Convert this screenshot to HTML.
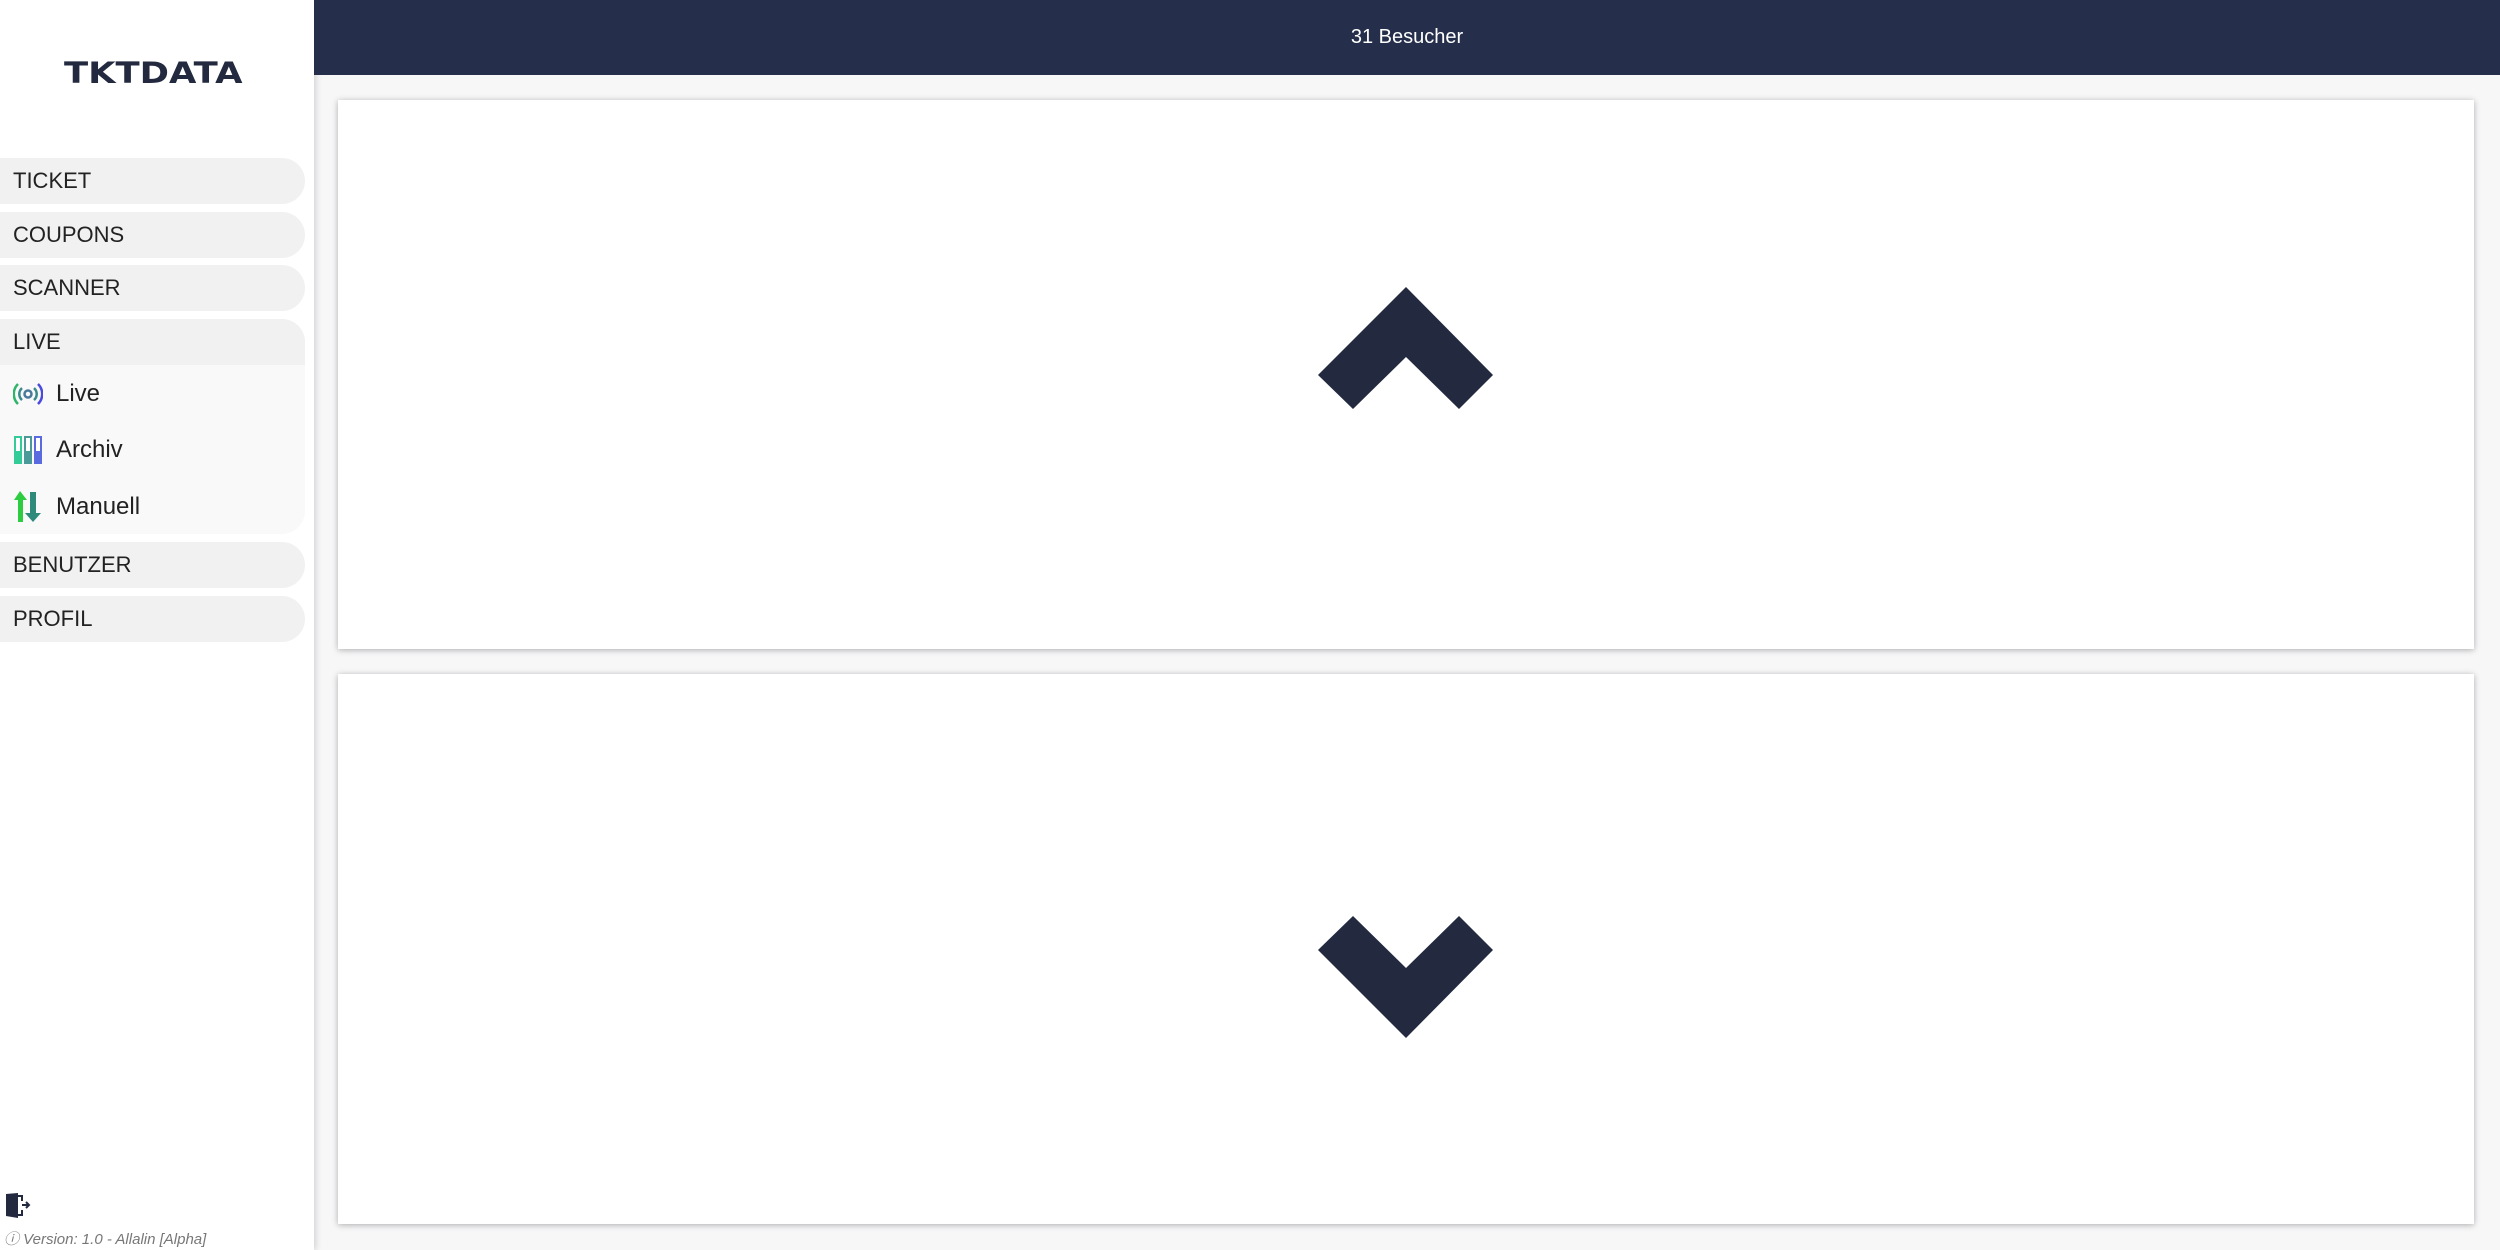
<!DOCTYPE html>
<html><head><meta charset="utf-8"><style>
*{margin:0;padding:0;box-sizing:border-box}
body{width:2500px;height:1250px;background:#f7f7f8;font-family:"Liberation Sans","DejaVu Sans",sans-serif;position:relative;overflow:hidden}
#side{position:absolute;left:0;top:0;width:314px;height:1250px;background:#fff;box-shadow:2px 0 6px rgba(0,0,0,.15)}
.logo{position:absolute;left:64px;top:56px;font-weight:900;font-size:29px;letter-spacing:0px;color:#232a40;font-family:"DejaVu Sans",sans-serif;transform:scaleX(1.22);transform-origin:left}
.nav{position:absolute;left:0;width:305px;height:46px;background:#f1f1f1;border-radius:0 23px 23px 0;font-size:22px;color:#222;padding-left:13px;line-height:46px}
.sub{position:absolute;left:0;top:319px;width:305px;height:215px;background:#f9f9f9;border-radius:0 23px 23px 0}
.sub .hd{height:46px;background:#f1f1f1;border-radius:0 23px 0 0;font-size:22px;color:#222;padding-left:13px;line-height:46px}
.it{position:absolute;left:13px;font-size:24px;color:#222;display:flex;align-items:center;height:40px}
.it svg{margin-right:13px}
#hdr{position:absolute;left:314px;top:0;right:0;height:75px;background:#252f4c;color:#fff;font-size:20px;text-align:center;line-height:75px}
.card{position:absolute;left:338px;width:2136px;background:#fff;box-shadow:0 1px 6px rgba(0,0,0,.3)}
</style></head><body>
<div id="side">
<div class="logo">TKTDATA</div>
<div class="nav" style="top:158px">TICKET</div>
<div class="nav" style="top:212px">COUPONS</div>
<div class="nav" style="top:265px">SCANNER</div>
<div class="sub"><div class="hd">LIVE</div></div>
<div class="it" style="top:374px"><svg width="30" height="22" viewBox="0 0 30 22"><circle cx="15" cy="11" r="3.5" fill="none" stroke="#4a7a9a" stroke-width="2.5"/><path d="M9 5a8 8 0 0 0 0 12M21 5a8 8 0 0 1 0 12" fill="none" stroke="#3a8a8a" stroke-width="2.5"/><path d="M5 1a14 14 0 0 0 0 20" fill="none" stroke="#2fb56a" stroke-width="2.5"/><path d="M25 1a14 14 0 0 1 0 20" fill="none" stroke="#4a4adf" stroke-width="2.5"/></svg>Live</div>
<div class="it" style="top:430px"><svg width="30" height="30" viewBox="0 0 30 30"><rect x="1" y="1" width="8" height="28" fill="#3c9" /><rect x="11" y="1" width="8" height="28" fill="#4a9a9a"/><rect x="21" y="1" width="8" height="28" fill="#5a6adf"/><rect x="3" y="3" width="4" height="13" fill="#fff"/><rect x="13" y="3" width="4" height="13" fill="#fff"/><rect x="23" y="3" width="4" height="13" fill="#fff"/></svg>Archiv</div>
<div class="it" style="top:487px"><svg width="30" height="32" viewBox="0 0 30 32"><path d="M7 0L1 9h4v22h5V9h4z" fill="#2ecc40"/><path d="M17 1h6v21h5l-8 9-8-9h5z" fill="#2e8a7a"/></svg>Manuell</div>
<div class="nav" style="top:542px">BENUTZER</div>
<div class="nav" style="top:596px">PROFIL</div>
<svg style="position:absolute;left:6px;top:1193px" width="26" height="25" viewBox="0 0 26 25"><path d="M0 1l12-1v25L0 23z" fill="#232a40"/><path d="M12 3h4v5M12 22h4v-5" fill="none" stroke="#232a40" stroke-width="2"/><path d="M16 12h7M20 9l3 3-3 3" fill="none" stroke="#232a40" stroke-width="2"/></svg>
<div style="position:absolute;left:4px;top:1228px;font-size:15px;font-style:italic;color:#777">ⓘ Version: 1.0 - Allalin [Alpha]</div>
</div>
<div id="hdr">31 Besucher</div>
<div class="card" style="top:100px;height:549px"></div>
<div class="card" style="top:674px;height:550px"></div>
<svg style="position:absolute;left:0;top:0" width="2500" height="1250"><polygon points="1406,287 1493,375 1459,409 1406,357 1353,409 1318,375" fill="#232a40"/><polygon points="1406,1038 1493,950 1459,916 1406,968 1353,916 1318,950" fill="#232a40"/></svg>
</body></html>
